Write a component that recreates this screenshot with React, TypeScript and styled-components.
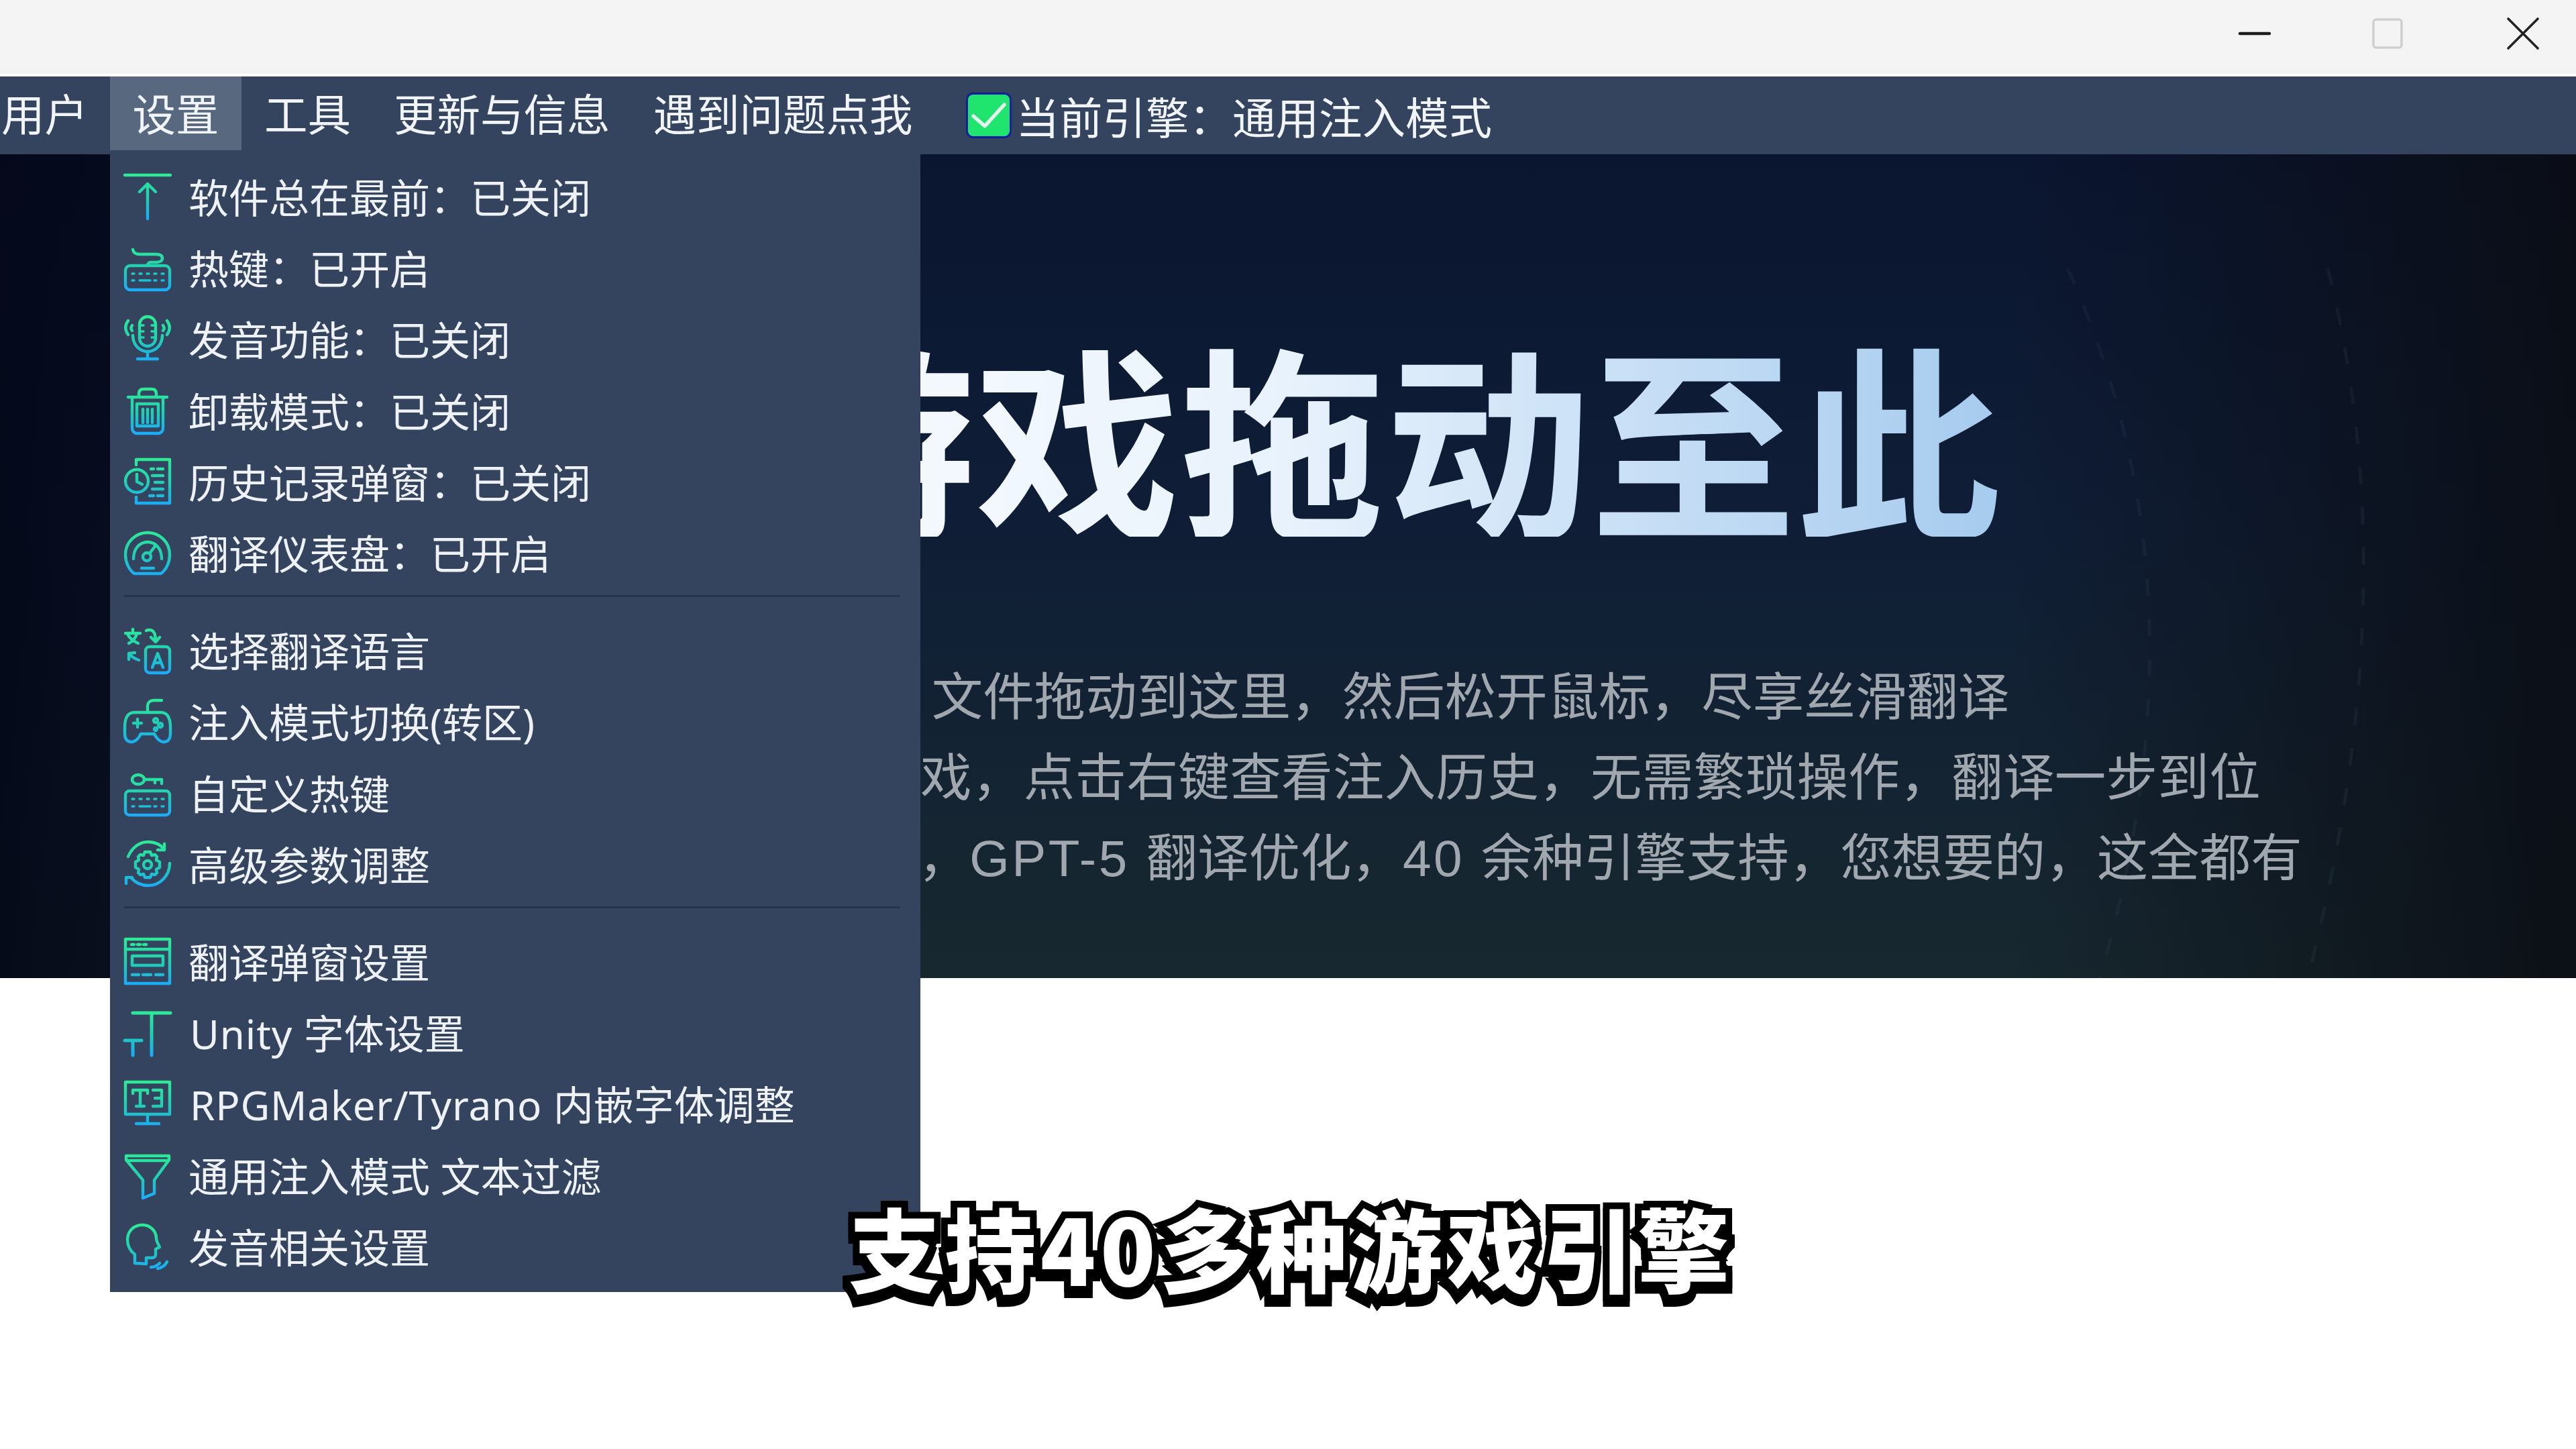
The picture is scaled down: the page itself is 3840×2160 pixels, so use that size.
import React, { useId } from "react";
import styled, { createGlobalStyle } from "styled-components";

const Global = createGlobalStyle`
  html, body { margin: 0; padding: 0; background: #fff; }
  #root { width: 3840px; height: 2160px; }
`;

const uiFont = `"Noto Sans", "Noto Sans CJK SC", sans-serif`;
const heroFont = `"Liberation Sans", "Noto Sans CJK SC", sans-serif`;

const Page = styled.div`
  position: relative;
  width: 3840px;
  height: 2160px;
  overflow: hidden;
  background: #fff;
  display: flex;
  flex-direction: column;
`;

const TitleBar = styled.div`
  height: 110px;
  margin-bottom: 4px;
  background: #f4f4f4;
  display: flex;
  align-items: flex-start;
  justify-content: flex-end;
  flex: none;
`;

const WinButton = styled.svg<{ $gap: number }>`
  width: 50px;
  height: 50px;
  margin-top: 25px;
  margin-right: ${(p) => p.$gap}px;
  flex: none;
`;

const MenuBar = styled.div`
  height: 116px;
  flex: none;
  background: #34445f;
  display: flex;
  align-items: flex-start;
  font-family: ${uiFont};
  font-size: 64.5px;
  color: #f1f4f8;
  position: relative;
  z-index: 2;
`;

const TopItem = styled.div<{ $active?: boolean; $pad?: number; $lead?: number }>`
  position: relative;
  height: 110px;
  line-height: 112px;
  padding: 0 ${(p) => p.$pad ?? 32}px;
  margin-left: ${(p) => p.$lead ?? 0}px;
  background: ${(p) => (p.$active ? "#57687f" : "transparent")};
  white-space: nowrap;
  flex: none;
`;

const EngineStatus = styled.div`
  display: flex;
  align-items: center;
  height: 116px;
  margin-left: 47px;
  gap: 7px;
  white-space: nowrap;
`;

const Check = styled.svg`
  width: 68px;
  height: 68px;
  flex: none;
`;

const Dropdown = styled.div`
  position: absolute;
  left: 0;
  top: 116px;
  width: 1208px;
  height: 1696px;
  box-sizing: border-box;
  padding-top: 10px;
  background: #34445f;
  font-size: 60px;
  line-height: 106px;
  display: flex;
  flex-direction: column;
`;

const Row = styled.div`
  height: 106.2px;
  display: flex;
  align-items: center;
  padding-left: 21px;
  gap: 26px;
  flex: none;
  color: #eef1f5;
`;

const RowLabel = styled.span`
  padding-top: 4px;
`;

const MenuLatin = styled.span`
  letter-spacing: 0.9px;
  margin-left: 2px;
`;

const Sep = styled.div`
  height: 3px;
  margin: 10px 30px 26px 21px;
  background: #26344a;
  flex: none;
`;

const IconSvg = styled.svg`
  width: 70px;
  height: 70px;
  flex: none;
  overflow: visible;
`;

const Hero = styled.div`
  height: 1228px;
  flex: none;
  box-sizing: border-box;
  padding-top: 264px;
  position: relative;
  overflow: hidden;
  display: flex;
  flex-direction: column;
  align-items: center;
  background:
    linear-gradient(90deg, rgba(3,6,22,0.85) 0%, rgba(3,6,22,0) 30%, rgba(0,0,0,0) 78%, rgba(10,12,18,0.85) 100%),
    linear-gradient(180deg, #0a1530 0%, #0f1e36 45%, #17282f 100%);
  font-family: ${heroFont};
`;

const HeroArcs = styled.svg`
  position: absolute;
  left: 0;
  top: 0;
  width: 3840px;
  height: 1228px;
`;

const HeroTitle = styled.div`
  position: relative;
  font-size: 306px;
  line-height: 306px;
  font-weight: 700;
  white-space: nowrap;
  margin-right: 16px;
  background: linear-gradient(90deg, #ffffff 0%, #e8f2fc 50%, #a6cbee 100%);
  -webkit-background-clip: text;
  background-clip: text;
  color: transparent;
  font-family: "Noto Sans CJK SC", sans-serif;
`;

const HeroLine = styled.div<{ $first?: boolean; $tracking?: number; $shift?: number }>`
  position: relative;
  font-size: 76.5px;
  line-height: 120px;
  color: #a1a7ae;
  white-space: nowrap;
  letter-spacing: ${(p) => p.$tracking ?? 0}px;
  margin-right: ${(p) => p.$shift ?? 0}px;
  margin-top: ${(p) => (p.$first ? 180 : 0)}px;
`;

const LatinRun = styled.span`
  letter-spacing: 3.5px;
`;

const Caption = styled.div`
  position: absolute;
  left: 0;
  right: 0;
  top: 1773px;
  padding-left: 10px;
  text-align: center;
  font-family: "Noto Sans CJK SC", sans-serif;
  font-weight: 900;
  font-size: 136px;
  line-height: 170px;
  letter-spacing: 6.5px;
  color: #fff;
  -webkit-text-stroke: 20px #000;
  paint-order: stroke fill;
  filter: drop-shadow(0 8px 0 #000);
  z-index: 5;
`;

const Icon = ({ children }: { children: React.ReactNode }) => {
  const id = useId();
  return (
    <IconSvg viewBox="0 0 70 70">
      <defs>
        <linearGradient id={id} gradientUnits="userSpaceOnUse" x1="0" y1="0" x2="0" y2="70">
          <stop offset="0" stopColor="#2eec95" />
          <stop offset="0.55" stopColor="#22cdb4" />
          <stop offset="1" stopColor="#1babfa" />
        </linearGradient>
      </defs>
      <g fill="none" stroke={`url(#${id})`} strokeWidth="4.4" strokeLinecap="round" strokeLinejoin="round">
        {children}
      </g>
    </IconSvg>
  );
};

const icons: Record<string, React.ReactNode> = {
  top: <path d="M1 3h68M35 68V16M23 28l12-12 12 12" />,
  keyboard: (
    <>
      <path d="M13 8c1 5 4 7 10 7h24c6 0 10 2 10 6s-4 6-9 6H40c-3 0-5 2-5 5" />
      <rect x="2" y="32" width="66" height="36" rx="7" />
      <path d="M12 44h3M23 44h3M34 44h3M45 44h3M56 44h3M12 54h3M23 54h16M45 54h3M56 54h3" strokeWidth="3.4" />
    </>
  ),
  mic: (
    <>
      <rect x="23" y="2" width="24" height="44" rx="12" />
      <path d="M23 15h6M41 15h6M23 24h6M41 24h6M23 33h6M41 33h6" strokeWidth="3.4" />
      <path d="M13 30c0 14 10 24 22 24s22-10 22-24M35 54v11M20 65h30" />
      <path d="M6 8C1 15 1 22 6 29M64 8c5 7 5 14 0 21M12 15c-2 3-2 6 0 8M58 15c2 3 2 6 0 8" />
    </>
  ),
  trash: (
    <>
      <path d="M6 15h58M22 14v-4c0-5 3-7 7-7h12c4 0 7 2 7 7v4" />
      <path d="M12 15v46c0 5 3 8 8 8h30c5 0 8-3 8-8V15" />
      <rect x="19" y="25" width="32" height="33" />
      <path d="M28 33v20M35 33v20M42 33v20" />
    </>
  ),
  history: (
    <>
      <path d="M18 10V2h50v65H18v-9" />
      <circle cx="19" cy="34" r="17" />
      <path d="M19 24v11l8 4" />
      <path d="M40 16h4M50 16h8M42 26h16M46 36h12M42 46h16M38 56h6M50 56h8" />
    </>
  ),
  gauge: (
    <>
      <path d="M15 66C7 60 2 49 2 38 2 19 17 5 35 5s33 14 33 33c0 11-5 22-13 28z" />
      <path d="M14 44c0-15 9-25 21-25s21 10 21 25" />
      <circle cx="34" cy="41" r="6" />
      <path d="M38 36l9-12M26 58h18" />
    </>
  ),
  lang: (
    <>
      <path d="M13 4v5M2 10h22M7 25c6-3 10-8 12-14M5 11c3 6 9 11 16 14" />
      <path d="M33 6c4-2 9-1 11 2 2 3 3 7 3 14M40 16l7 7 6-7" />
      <path d="M22 50c-6-2-11-5-14-9M7 49l0-9 9-1" />
      <rect x="32" y="30" width="36" height="39" rx="6" />
      <path d="M42 61l8-21 8 21M45 54h10" />
    </>
  ),
  pad: (
    <>
      <path d="M35 22V13c0-6 4-9 9-9h12" />
      <path d="M15 22h40c9 0 14 8 14 22v10c0 8-4 12-10 12-5 0-8-3-11-7l-3-5H25l-3 5c-3 4-6 7-11 7-6 0-10-4-10-12V44C1 30 6 22 15 22z" />
      <path d="M14 38h12M20 32v12" />
      <circle cx="47" cy="34" r="3" />
      <circle cx="54" cy="41" r="3" />
      <circle cx="47" cy="47" r="2" />
    </>
  ),
  keykb: (
    <>
      <ellipse cx="21" cy="15" rx="9" ry="7" />
      <path d="M30 15h26v6M46 15v5" />
      <rect x="2" y="32" width="66" height="36" rx="6" />
      <path d="M12 44h3M23 44h3M34 44h3M45 44h3M56 44h3M12 55h3M23 55h16M45 55h3M56 55h3" strokeWidth="3.4" />
    </>
  ),
  gear: (
    <>
      <path d="M6 24C12 10 23 2 36 2c9 0 18 4 24 11M68 34c0 18-14 33-32 33-10 0-19-4-25-11" />
      <path d="M60 5v9H50M3 64V55h9" />
      <path d="M31 17h8l2 5 5-1 3 3-1 5 5 3v8l-5 3 1 5-3 3-5-1-2 5h-8l-2-5-5 1-3-3 1-5-5-3v-8l5-3-1-5 3-3 5 1z" />
      <circle cx="35" cy="36" r="6" />
    </>
  ),
  window: (
    <>
      <rect x="2" y="2" width="66" height="66" />
      <path d="M2 17h66M11 10h4M20 10h4M29 10h4" />
      <rect x="12" y="27" width="46" height="14" />
      <path d="M12 55h10M28 55h12M47 55h11" />
    </>
  ),
  font: (
    <>
      <path d="M13 6h56M41 6v63" strokeWidth="5" />
      <path d="M1 47h25M13 47v22" strokeWidth="5" />
    </>
  ),
  monitor: (
    <>
      <rect x="2" y="3" width="66" height="48" />
      <path d="M13 15h22M24 15v24M13 15v5M35 15v5M18 39h12" />
      <path d="M43 15h13v24H43M46 27h10" />
      <path d="M35 51v13M18 65h34" />
    </>
  ),
  funnel: (
    <>
      <path d="M3 6h64v6L45 42v20l-17 7V42L3 12z" />
      <path d="M4 13h62" />
    </>
  ),
  head: (
    <>
      <path d="M16 60V47C8 41 5 33 5 25 5 12 15 3 27 3c12 0 21 9 21 20 0 4 3 9 5 13l-6 3v8c0 3-2 5-5 5h-9v9z" />
      <path d="M40 66c5 0 10-3 13-6M50 68c5-1 11-4 14-10" />
    </>
  ),
};

type Item = { icon: keyof typeof icons; label: React.ReactNode; key: string };

const group1: Item[] = [
  { key: "a1", icon: "top", label: "软件总在最前：已关闭" },
  { key: "a2", icon: "keyboard", label: "热键：已开启" },
  { key: "a3", icon: "mic", label: "发音功能：已关闭" },
  { key: "a4", icon: "trash", label: "卸载模式：已关闭" },
  { key: "a5", icon: "history", label: "历史记录弹窗：已关闭" },
  { key: "a6", icon: "gauge", label: "翻译仪表盘：已开启" },
];
const group2: Item[] = [
  { key: "b1", icon: "lang", label: "选择翻译语言" },
  { key: "b2", icon: "pad", label: "注入模式切换(转区)" },
  { key: "b3", icon: "keykb", label: "自定义热键" },
  { key: "b4", icon: "gear", label: "高级参数调整" },
];
const group3: Item[] = [
  { key: "c1", icon: "window", label: "翻译弹窗设置" },
  { key: "c2", icon: "font", label: <><MenuLatin>Unity </MenuLatin>字体设置</> },
  { key: "c3", icon: "monitor", label: <><MenuLatin>RPGMaker/Tyrano </MenuLatin>内嵌字体调整</> },
  { key: "c4", icon: "funnel", label: "通用注入模式 文本过滤" },
  { key: "c5", icon: "head", label: "发音相关设置" },
];

const Rows = ({ items }: { items: Item[] }) => (
  <>
    {items.map((it) => (
      <Row key={it.key}>
        <Icon>{icons[it.icon]}</Icon>
        <RowLabel>{it.label}</RowLabel>
      </Row>
    ))}
  </>
);

export default function App() {
  return (
    <Page>
      <Global />
      <TitleBar>
        <WinButton viewBox="0 0 50 50" $gap={148}>
          <path d="M3 25h44" stroke="#1c1c1c" strokeWidth="4.5" strokeLinecap="round" />
        </WinButton>
        <WinButton viewBox="0 0 50 50" $gap={152}>
          <rect x="4" y="4" width="42" height="42" rx="4" fill="none" stroke="#cfcfcf" strokeWidth="3.5" />
        </WinButton>
        <WinButton viewBox="0 0 50 50" $gap={54}>
          <path d="M3 3l44 44M47 3L3 47" stroke="#222" strokeWidth="3.6" strokeLinecap="round" />
        </WinButton>
      </TitleBar>
      <MenuBar>
        <TopItem $lead={-31} $pad={33}>用户</TopItem>
        <TopItem $active $pad={33.5}>
          设置
          <Dropdown>
            <Rows items={group1} />
            <Sep />
            <Rows items={group2} />
            <Sep />
            <Rows items={group3} />
          </Dropdown>
        </TopItem>
        <TopItem $lead={2}>工具</TopItem>
        <TopItem>更新与信息</TopItem>
        <TopItem>遇到问题点我</TopItem>
        <EngineStatus>
          <Check viewBox="0 0 68 68">
            <rect x="1.5" y="1.5" width="65" height="65" rx="9" fill="#1fe56e" stroke="#0d1f9e" strokeWidth="3" />
            <path d="M11 35l17 15 29-32" fill="none" stroke="#e4f9ec" strokeWidth="5.5" strokeLinecap="round" strokeLinejoin="round" />
          </Check>
          <span>当前引擎：通用注入模式</span>
        </EngineStatus>
      </MenuBar>
      <Hero>
        <HeroArcs viewBox="0 0 3840 1228">
          <path d="M3082 170Q3300 650 3130 1228" fill="none" stroke="#8fb0c8" strokeOpacity="0.06" strokeWidth="5" strokeDasharray="26 34" />
          <path d="M3470 170Q3590 650 3440 1228" fill="none" stroke="#8fb0c8" strokeOpacity="0.07" strokeWidth="5" strokeDasharray="26 34" />
        </HeroArcs>
        <HeroTitle>将游戏拖动至此</HeroTitle>
        <HeroLine $first>将您想玩的游{"\u00a0\u00a0\u00a0\u00a0"}文件拖动到这里，然后松开鼠标，尽享丝滑翻译</HeroLine>
        <HeroLine $tracking={0.35} $shift={20}>注入后可在列表中选择该游戏，点击右键查看注入历史，无需繁琐操作，翻译一步到位</HeroLine>
        <HeroLine>
          文本内嵌 字体替换 云端词库，<LatinRun>GPT-5 </LatinRun>翻译优化，<LatinRun>40 </LatinRun>余种引擎支持，您想要的，这全都有
        </HeroLine>
      </Hero>
      <Caption>支持40多种游戏引擎</Caption>
    </Page>
  );
}
